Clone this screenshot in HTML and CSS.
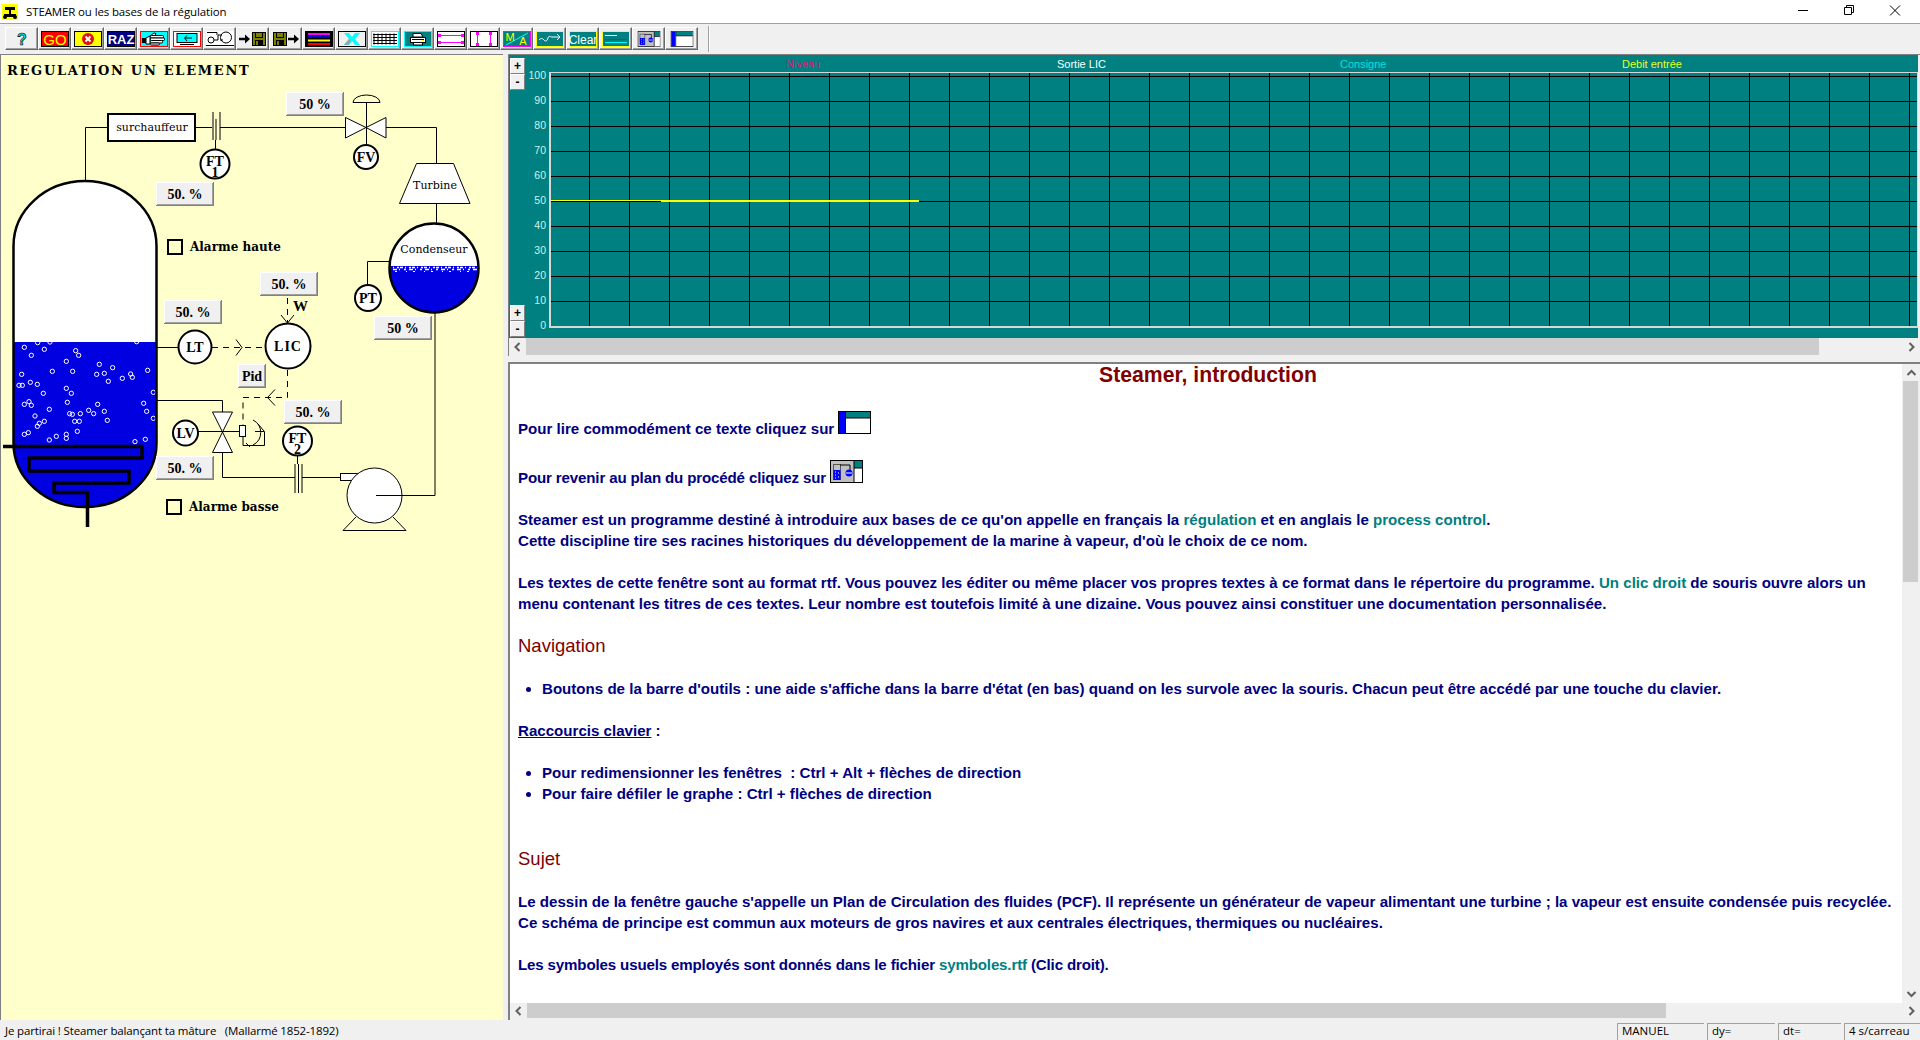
FILE: index.html
```html
<!DOCTYPE html>
<html lang="fr">
<head>
    <meta charset="UTF-8">
    <title>STEAMER ou les bases de la régulation</title>
    <link rel="stylesheet" href="styles.css">
</head>
<body>
    <!-- shared icons and readout box -->
    <svg class="defs" width="0" height="0">
        <symbol id="ico-panes" viewBox="0 0 33 23">
            <rect x="0.5" y="0.5" width="32" height="22" fill="#c0c0c0" stroke="#000"/>
            <rect x="24" y="1" width="8" height="7" fill="#008080"/>
            <rect x="24" y="8" width="8" height="14" fill="#fff"/>
            <path d="M24 1v21M24 8h8" stroke="#000" fill="none"/>
            <rect x="3.5" y="4.5" width="7" height="15" fill="#c0c0c0" stroke="#555"/>
            <rect x="3.5" y="10" width="7" height="10" fill="#0000ff"/>
            <path d="M5 12h1M8 13h1M5 15h1M8 17h1M5 18h1" stroke="#fff"/>
            <path d="M10 5h10v10" stroke="#000" fill="none"/>
            <circle cx="19" cy="13" r="3.5" fill="#0000ff"/>
            <path d="M16 13h6" stroke="#fff"/>
        </symbol>
        <symbol id="ico-window" viewBox="0 0 33 23">
            <rect x="0.5" y="0.5" width="32" height="22" fill="#fff" stroke="#000"/>
            <rect x="1" y="1" width="6" height="21" fill="#0000ff"/>
            <rect x="7" y="1" width="25" height="6" fill="#008080"/>
            <path d="M7.5 1v21M8 7h24" stroke="#000" fill="none"/>
        </symbol>
        <symbol id="ico-floppy" viewBox="0 0 14 14">
            <rect x="0.5" y="0.5" width="13" height="13" fill="#808000" stroke="#000"/>
            <rect x="3" y="0" width="8" height="6" fill="#000"/>
            <rect x="4" y="1" width="6" height="4" fill="#808000"/>
            <rect x="3" y="8" width="8" height="6" fill="#000"/>
            <rect x="4" y="9" width="2" height="4" fill="#808000"/>
        </symbol>
        <symbol id="readout" viewBox="0 0 58 24">
            <rect width="58" height="24" fill="#808080"/>
            <rect width="57" height="23" fill="#fff"/>
            <rect x="1" y="1" width="56" height="22" fill="#a0a0a0"/>
            <rect x="1" y="1" width="55" height="21" fill="#f0f0f0"/>
        </symbol>
        <symbol id="readout-small" viewBox="0 0 28 24">
            <rect width="28" height="24" fill="#808080"/>
            <rect width="27" height="23" fill="#fff"/>
            <rect x="1" y="1" width="26" height="22" fill="#a0a0a0"/>
            <rect x="1" y="1" width="25" height="21" fill="#f0f0f0"/>
        </symbol>
    </svg>

    <header class="titlebar">
        <svg class="app-icon" width="16" height="16" viewBox="0 0 16 16">
            <rect width="16" height="16" fill="#ffff00"/>
            <path d="M3 3h10v3H9v4h5v3H2v-3h5V6H3z" fill="#000"/>
            <circle cx="3" cy="13" r="2" fill="#000"/>
            <circle cx="13" cy="13" r="2" fill="#000"/>
        </svg>
        <span class="app-title">STEAMER ou les bases de la régulation</span>
        <div class="win-controls">
            <svg width="46" height="23" viewBox="0 0 46 23"><path d="M18 10.5h10" stroke="#000" fill="none"/></svg>
            <svg width="46" height="23" viewBox="0 0 46 23"><path d="M18.5 7.5h7v7h-7zM20.5 7.5v-2h7v7h-2" stroke="#000" fill="none"/></svg>
            <svg width="46" height="23" viewBox="0 0 46 23"><path d="M18 5.5l10 10M28 5.5l-10 10" stroke="#000" fill="none"/></svg>
        </div>
    </header>

    <nav class="toolbar">
        <button class="tool"><svg class="ico" viewBox="0 0 28 16"><text class="ico-help" x="14" y="14">?</text></svg></button>
        <button class="tool"><svg class="ico" viewBox="0 0 28 16"><rect x=".5" y=".5" width="27" height="15" fill="#f00" stroke="#000"/><text class="ico-txt go" x="14" y="13.5">GO</text></svg></button>
        <button class="tool"><svg class="ico" viewBox="0 0 28 16"><rect x=".5" y=".5" width="27" height="15" fill="#ff0" stroke="#000"/><circle cx="14" cy="8" r="6" fill="#e01010"/><path d="M11.5 5.5l5 5M16.5 5.5l-5 5" stroke="#fff" stroke-width="2"/></svg></button>
        <button class="tool"><svg class="ico" viewBox="0 0 28 16"><rect x=".5" y=".5" width="27" height="15" fill="#000080" stroke="#000"/><text class="ico-txt raz" x="14" y="13">RAZ</text></svg></button>
        <button class="tool"><svg class="ico" viewBox="0 0 28 16"><rect x=".5" y=".5" width="27" height="15" fill="#0ff" stroke="#f00"/><rect x="2" y="7" width="4" height="5" fill="#000"/><path d="M6 7l4-2 4-3 2 .5-1.500 2.500H10v8H6z" fill="#fff" stroke="#000"/><g fill="#fff" stroke="#000"><rect x="10.500" y="4.500" width="13" height="2.500" rx="1"/><rect x="10.500" y="7" width="14" height="2.500" rx="1"/><rect x="10.500" y="9.500" width="12" height="2.500" rx="1"/><rect x="10.500" y="12" width="9" height="2" rx="1"/></g></svg></button>
        <button class="tool"><svg class="ico" viewBox="0 0 28 16"><rect x=".5" y=".5" width="27" height="15" fill="#fff" stroke="#f00"/><rect x="4" y="2.500" width="20" height="9" fill="#0ff" stroke="#000"/><path d="M19 7h-7m2-2.500L11.500 7l2.500 3M7 13.500h14" stroke="#000" fill="none"/></svg></button>
        <button class="tool"><svg class="ico" viewBox="0 0 28 16"><rect width="28" height="16" fill="#fff"/><circle cx="5" cy="9" r="3" fill="none" stroke="#000"/><circle cx="20" cy="6.500" r="5.500" fill="none" stroke="#000"/><path d="M8 9h4V4h4M14 9h3M0 14.500h28M1 1.500h10V4" stroke="#000" fill="none"/></svg></button>
        <button class="tool"><svg class="ico" viewBox="0 0 28 16"><path d="M0 8h8" stroke="#000" stroke-width="2.500"/><path d="M6 3.500l5 4.500-5 4.500z" fill="#000"/><use href="#ico-floppy" x="13" y="1" width="14" height="14"/></svg></button>
        <button class="tool"><svg class="ico" viewBox="0 0 28 16"><use href="#ico-floppy" x="1" y="1" width="14" height="14"/><path d="M16 8h8" stroke="#000" stroke-width="2.500"/><path d="M22 3.500l5 4.500-5 4.500z" fill="#000"/></svg></button>
        <button class="tool"><svg class="ico" viewBox="0 0 28 16"><rect width="28" height="16" fill="#000"/><path d="M3 3h22" stroke="#f0f" stroke-width="2"/><path d="M3 6h22" stroke="#0000c0" stroke-width="2"/><path d="M3 9.500h22" stroke="#ff0" stroke-width="2"/><path d="M3 13h22" stroke="#f00" stroke-width="2"/></svg></button>
        <button class="tool"><svg class="ico" viewBox="0 0 28 16"><rect x=".5" y=".5" width="27" height="15" fill="#f0f0f0" stroke="#000"/><path d="M6 2h5l3 4 3-4h5l-5 6 5 6h-5l-3-4-3 4H6l5-6z" fill="#0ff"/><path d="M6 14l5-6 2 2-3 4z" fill="#a0a0a0"/></svg></button>
        <button class="tool"><svg class="ico" viewBox="0 0 28 16"><rect x=".5" y=".5" width="27" height="15" fill="#fff" stroke="#0ff"/><path d="M3 2.500v11M7 2.500v11M11 2.500v11M15 2.500v11M19 2.500v11M23 2.500v11M2 3.500h24M2 6.500h24M2 9.500h24M2 12.500h24" stroke="#000" fill="none"/></svg></button>
        <button class="tool"><svg class="ico" viewBox="0 0 28 16"><rect x=".5" y=".5" width="27" height="15" fill="#008080" stroke="#0ff"/><path d="M9 6V2.500h8L19 6z" fill="#fff" stroke="#000"/><rect x="6.500" y="6.500" width="15" height="5" fill="#fff" stroke="#000"/><rect x="9.500" y="11.500" width="9" height="2.500" fill="#fff" stroke="#000"/><path d="M8 8.500h12" stroke="#000"/><rect x="18" y="9" width="2" height="1" fill="#ff0"/></svg></button>
        <button class="tool"><svg class="ico" viewBox="0 0 28 16"><rect x=".5" y=".5" width="27" height="15" fill="#fff" stroke="#000"/><path d="M2 4.500h24M2 11.500h24" stroke="#f0f"/><path d="M1 3h3v3H1zM24 3h3v3h-3zM1 10h3v3H1zM24 10h3v3h-3z" fill="#f0f"/></svg></button>
        <button class="tool"><svg class="ico" viewBox="0 0 28 16"><rect x=".5" y=".5" width="27" height="15" fill="#fff" stroke="#000"/><path d="M7.500 2v12M20.500 2v12" stroke="#f0f"/><path d="M6 1h3v3H6zM19 1h3v3h-3zM6 12h3v3H6zM19 12h3v3h-3z" fill="#f0f"/></svg></button>
        <button class="tool"><svg class="ico" viewBox="0 0 28 16"><rect x=".5" y=".5" width="27" height="15" fill="#008080" stroke="#f0f"/><path d="M3 14L25 2" stroke="#0ff"/><text class="ico-txt ma" x="7" y="10">M</text><text class="ico-txt ma" x="20" y="14">A</text></svg></button>
        <button class="tool"><svg class="ico" viewBox="0 0 28 16"><rect x=".5" y=".5" width="27" height="15" fill="#008080" stroke="#ff0"/><path d="M3 9c2-2 3-2 5 0s3 1 4-2 2-1 4-1h8m-3-3l3 3-3 3" stroke="#fff" fill="none"/></svg></button>
        <button class="tool"><svg class="ico" viewBox="0 0 28 16"><rect x=".5" y=".5" width="27" height="15" fill="#008080" stroke="#ff0"/><text class="ico-txt clear" x="14" y="12.500">Clear</text></svg></button>
        <button class="tool"><svg class="ico" viewBox="0 0 28 16"><rect x=".5" y=".5" width="27" height="15" fill="#008080" stroke="#ff0"/><path d="M3 4.500h12" stroke="#fff"/><path d="M3 8.500h22" stroke="#f00"/><path d="M3 11.500h22" stroke="#0ff"/></svg></button>
        <button class="tool"><svg class="ico" viewBox="0 0 33 23"><use href="#ico-panes" width="33" height="23"/></svg></button>
        <button class="tool"><svg class="ico" viewBox="0 0 33 23"><use href="#ico-window" width="33" height="23"/></svg></button>
        <span class="tool-sep"></span>
    </nav>

    <main class="workspace">
        <!-- process diagram: viewBox uses page coordinates -->
        <section class="pcf">
            <svg class="pcf-svg" width="503" height="966" viewBox="0 54 503 966">
                <defs>
                    <clipPath id="boiler-clip">
                        <path d="M13.500 246A71.500 65 0 0 1 156.500 246V443A71.500 64 0 0 1 13.500 443Z"/>
                    </clipPath>
                    <clipPath id="cond-clip"><circle cx="434" cy="268" r="44"/></clipPath>
                </defs>
                <text class="pcf-head" x="7" y="75">REGULATION UN ELEMENT</text>

                <!-- pipes -->
                <g class="pipe">
                    <path d="M85.500 181V127.500H107M195 127.500H212M220 127.500H345M386 127.500H436.500V163"/>
                    <path d="M213 112V140M216 119V140M220 112V140M215.500 140V149"/>
                    <path d="M366.500 102V145"/>
                    <path d="M353 102.500A13.500 7.500 0 0 1 380 102.500Z" fill="none"/>
                    <path d="M436.500 203V224M389 261.500H367.500V285M435 313V495.500H376"/>
                    <path d="M157 347.500H178M157 400.500H222.500V412M198 431.500H240M222.500 453V477.500H295M302 477.500H340"/>
                    <path d="M295 464V493M298.500 464V493M302 464V493M297.500 455V464"/>
                </g>
                <path class="shape" d="M345.500 117.500V138L366 127.500ZM386 117.500V138L366 127.500Z"/>
                <path class="shape" d="M416.500 163.500H453.500L470 203.500H399.500Z"/>
                <path class="shape" d="M212.500 412H232.500L222.500 432ZM212.500 452.500H232.500L222.500 432Z"/>
                <rect class="box" x="108" y="114" width="87" height="27"/>
                <text class="lbl" x="152" y="131">surchauffeur</text>
                <text class="lbl" x="435" y="189">Turbine</text>

                <!-- boiler -->
                <path d="M13.500 246A71.500 65 0 0 1 156.500 246V443A71.500 64 0 0 1 13.500 443Z" fill="#fff"/>
                <g clip-path="url(#boiler-clip)">
                    <rect x="10" y="342" width="150" height="170" fill="#0000e0"/>
                    <g class="bubbles" transform="translate(0 320) scale(.3333)">
                        <circle cx="73" cy="82" r="6.500"/><circle cx="133" cy="88" r="6.500"/><circle cx="94" cy="106" r="6.500"/><circle cx="113" cy="68" r="6.500"/><circle cx="150" cy="66" r="6.500"/><circle cx="227" cy="92" r="6.500"/><circle cx="236" cy="106" r="6.500"/><circle cx="199" cy="124" r="6.500"/><circle cx="298" cy="133" r="6.500"/><circle cx="338" cy="143" r="6.500"/><circle cx="157" cy="154" r="6.500"/><circle cx="218" cy="154" r="6.500"/><circle cx="65" cy="163" r="6.500"/><circle cx="290" cy="163" r="6.500"/><circle cx="313" cy="160" r="6.500"/><circle cx="392" cy="162" r="6.500"/><circle cx="397" cy="172" r="6.500"/><circle cx="443" cy="151" r="6.500"/><circle cx="367" cy="175" r="6.500"/><circle cx="325" cy="184" r="6.500"/><circle cx="57" cy="196" r="6.500"/><circle cx="67" cy="196" r="6.500"/><circle cx="91" cy="187" r="6.500"/><circle cx="112" cy="193" r="6.500"/><circle cx="199" cy="205" r="6.500"/><circle cx="214" cy="220" r="6.500"/><circle cx="130" cy="220" r="6.500"/><circle cx="460" cy="217" r="6.500"/><circle cx="202" cy="247" r="6.500"/><circle cx="87" cy="245" r="6.500"/><circle cx="73" cy="253" r="6.500"/><circle cx="94" cy="256" r="6.500"/><circle cx="293" cy="253" r="6.500"/><circle cx="431" cy="250" r="6.500"/><circle cx="148" cy="268" r="6.500"/><circle cx="266" cy="271" r="6.500"/><circle cx="281" cy="281" r="6.500"/><circle cx="209" cy="281" r="6.500"/><circle cx="217" cy="283" r="6.500"/><circle cx="241" cy="281" r="6.500"/><circle cx="313" cy="274" r="6.500"/><circle cx="440" cy="274" r="6.500"/><circle cx="105" cy="288" r="6.500"/><circle cx="460" cy="295" r="6.500"/><circle cx="133" cy="304" r="6.500"/><circle cx="118" cy="310" r="6.500"/><circle cx="112" cy="319" r="6.500"/><circle cx="224" cy="304" r="6.500"/><circle cx="238" cy="304" r="6.500"/><circle cx="322" cy="301" r="6.500"/><circle cx="232" cy="334" r="6.500"/><circle cx="73" cy="343" r="6.500"/><circle cx="85" cy="338" r="6.500"/><circle cx="199" cy="343" r="6.500"/><circle cx="199" cy="355" r="6.500"/><circle cx="169" cy="349" r="6.500"/><circle cx="148" cy="360" r="6.500"/><circle cx="405" cy="365" r="6.500"/><circle cx="436" cy="358" r="6.500"/><circle cx="410" cy="65" r="6.500"/>
                    </g>
                </g>
                <path class="vessel" d="M13.500 246A71.500 65 0 0 1 156.500 246V443A71.500 64 0 0 1 13.500 443Z"/>
                <path class="coil" d="M3 446.500H142V458H29V471H129V483H54V492.500H87.500V527"/>

                <!-- condenser -->
                <circle cx="434" cy="268" r="44" fill="#fff"/>
                <g clip-path="url(#cond-clip)">
                    <rect x="388" y="266" width="92" height="48" fill="#0000e0"/>
                    <path class="foam" d="M388 267.500H480"/>
                    <path class="foam foam-b" d="M388 269.500H480"/>
                    <path class="foam foam-c" d="M388 271.500H480"/>
                </g>
                <circle class="vessel" cx="434" cy="268" r="44.500"/>
                <text class="lbl" x="434" y="253">Condenseur</text>

                <!-- pump -->
                <rect class="shape" x="340.500" y="473.500" width="18" height="7"/>
                <circle class="shape" cx="374.500" cy="495.500" r="27.500"/>
                <path class="pipe" d="M376 495.500H402M356 517L343 530.500H406L393 517"/>

                <!-- signals -->
                <g class="signal">
                    <path d="M212 347.500H265M287.500 298V323M287.500 370V397.500H243V425"/>
                </g>
                <g class="pipe">
                    <path d="M236 339.500L242 347.500L236 355.500M281 315L287.500 323L294 315M275 389.500L267.500 397.500L275 405.500"/>
                </g>
                <text class="ltr" x="293" y="311">W</text>

                <!-- actuator on the feed valve -->
                <rect class="shape" x="239.500" y="425.500" width="6" height="11"/>
                <g class="pipe">
                    <path d="M253 420A14 14 0 0 1 253 445M243 437V445.500H264.500V431.500H255M258 424L264 431M246 443L250 447"/>
                </g>

                <!-- instruments -->
                <circle class="inst" cx="215" cy="164" r="14.500"/>
                <text class="tag" x="215" y="166">FT</text>
                <text class="tag tag-sub" x="215" y="177">1</text>
                <circle class="inst" cx="366" cy="157" r="12"/>
                <text class="tag" x="366" y="162">FV</text>
                <circle class="inst" cx="368" cy="298" r="13"/>
                <text class="tag" x="368" y="303">PT</text>
                <circle class="inst" cx="195" cy="347" r="16.500"/>
                <text class="tag" x="195" y="352">LT</text>
                <circle class="inst" cx="288" cy="346" r="22.500"/>
                <text class="tag tag-wide" x="288" y="351">LIC</text>
                <circle class="inst" cx="185.500" cy="433" r="12.500"/>
                <text class="tag" x="185.500" y="438">LV</text>
                <circle class="inst" cx="297.500" cy="441" r="14.500"/>
                <text class="tag" x="297.500" y="443">FT</text>
                <text class="tag tag-sub" x="297.500" y="454">2</text>

                <!-- readouts -->
                <use href="#readout" x="286" y="92" width="58" height="24"/>
                <text class="val" x="315" y="109">50 %</text>
                <use href="#readout" x="156" y="182" width="58" height="24"/>
                <text class="val" x="185" y="199">50. %</text>
                <use href="#readout" x="260" y="272" width="58" height="24"/>
                <text class="val" x="289" y="289">50. %</text>
                <use href="#readout" x="164" y="300" width="58" height="24"/>
                <text class="val" x="193" y="317">50. %</text>
                <use href="#readout" x="374" y="316" width="58" height="24"/>
                <text class="val" x="403" y="333">50 %</text>
                <use href="#readout" x="284" y="400" width="58" height="24"/>
                <text class="val" x="313" y="417">50. %</text>
                <use href="#readout" x="156" y="456" width="58" height="24"/>
                <text class="val" x="185" y="473">50. %</text>
                <use href="#readout-small" x="238" y="364" width="28" height="24"/>
                <text class="val" x="252" y="381">Pid</text>

                <!-- alarms -->
                <rect class="box box-empty" x="168" y="240" width="14" height="14"/>
                <text class="alarm" x="190" y="251">Alarme haute</text>
                <rect class="box box-empty" x="167" y="500" width="14" height="14"/>
                <text class="alarm" x="189" y="511">Alarme basse</text>
            </svg>
        </section>

        <div class="right-col">
            <section class="chart">
                <div class="chart-body">
                    <div class="zoom-btns">
                        <div class="zoom-pair">
                            <button class="zoom-btn">+</button>
                            <button class="zoom-btn">-</button>
                        </div>
                        <div class="zoom-pair">
                            <button class="zoom-btn">+</button>
                            <button class="zoom-btn">-</button>
                        </div>
                    </div>
                    <div class="scale">
                        <span>100</span><span>90</span><span>80</span><span>70</span><span>60</span><span>50</span><span>40</span><span>30</span><span>20</span><span>10</span><span>0</span>
                    </div>
                    <div class="plot-col">
                        <div class="legend">
                            <span class="c-niveau">Niveau</span>
                            <span class="c-sortie">Sortie LIC</span>
                            <span class="c-consigne">Consigne</span>
                            <span class="c-debit">Debit entrée</span>
                        </div>
                        <div class="plot">
                            <div class="trace trace-old"></div>
                            <div class="trace trace-new"></div>
                        </div>
                    </div>
                </div>
                <div class="hscroll">
                    <svg class="chev" viewBox="0 0 10 10"><path d="M7 1L3 5l4 4"/></svg>
                    <div class="hscroll-track"><div class="thumb thumb-chart"></div></div>
                    <svg class="chev" viewBox="0 0 10 10"><path d="M3 1l4 4-4 4"/></svg>
                </div>
            </section>

            <section class="doc">
                <div class="doc-row">
                    <article class="doc-text">
                        <h1>Steamer, introduction</h1>
                        <p>Pour lire commodément ce texte cliquez sur <svg class="inline-ico" viewBox="0 0 33 23"><use href="#ico-window" width="33" height="23"/></svg></p>
                        <p class="tight">Pour revenir au plan du procédé cliquez sur <svg class="inline-ico" viewBox="0 0 33 23"><use href="#ico-panes" width="33" height="23"/></svg></p>
                        <p>Steamer est un programme destiné à introduire aux bases de ce qu'on appelle en français la <a>régulation</a> et en anglais le <a>process control</a>.<br>Cette discipline tire ses racines historiques du développement de la marine à vapeur, d'où le choix de ce nom.</p>
                        <p>Les textes de cette fenêtre sont au format rtf. Vous pouvez les éditer ou même placer vos propres textes à ce format dans le répertoire du programme. <a>Un clic droit</a> de souris ouvre alors un<br>menu contenant les titres de ces textes. Leur nombre est toutefois limité à une dizaine. Vous pouvez ainsi constituer une documentation personnalisée.</p>
                        <h2>Navigation</h2>
                        <ul>
                            <li>Boutons de la barre d'outils : une aide s'affiche dans la barre d'état (en bas) quand on les survole avec la souris. Chacun peut être accédé par une touche du clavier.</li>
                        </ul>
                        <p><u>Raccourcis clavier</u> :</p>
                        <ul>
                            <li>Pour redimensionner les fenêtres &nbsp;: Ctrl + Alt + flèches de direction</li>
                            <li>Pour faire défiler le graphe : Ctrl + flèches de direction</li>
                        </ul>
                        <h2 class="h2-far">Sujet</h2>
                        <p>Le dessin de la fenêtre gauche s'appelle un Plan de Circulation des fluides (PCF). Il représente un générateur de vapeur alimentant une turbine ; la vapeur est ensuite condensée puis recyclée.<br>Ce schéma de principe est commun aux moteurs de gros navires et aux centrales électriques, thermiques ou nucléaires.</p>
                        <p class="tight">Les symboles usuels employés sont donnés dans le fichier <a>symboles.rtf</a> (Clic droit).</p>
                    </article>
                    <div class="vscroll">
                        <svg class="chev" viewBox="0 0 10 10"><path d="M1 7l4-4 4 4"/></svg>
                        <div class="vscroll-track"><div class="thumb thumb-doc"></div></div>
                        <svg class="chev" viewBox="0 0 10 10"><path d="M1 3l4 4 4-4"/></svg>
                    </div>
                </div>
                <div class="hscroll hscroll-doc">
                    <svg class="chev" viewBox="0 0 10 10"><path d="M7 1L3 5l4 4"/></svg>
                    <div class="hscroll-track"><div class="thumb thumb-dochz"></div></div>
                    <svg class="chev" viewBox="0 0 10 10"><path d="M3 1l4 4-4 4"/></svg>
                </div>
            </section>
        </div>
    </main>

    <footer class="statusbar">
        <span class="status-msg">Je partirai ! Steamer balançant ta mâture &nbsp; (Mallarmé 1852-1892)</span>
        <span class="panel panel-mode">MANUEL</span>
        <span class="panel panel-dy">dy=</span>
        <span class="panel panel-dt">dt=</span>
        <span class="panel panel-step">4 s/carreau</span>
    </footer>
</body>
</html>
```

FILE: styles.css
```css
html, body {
    margin: 0;
    padding: 0;
    height: 100%;
}

body {
    display: flex;
    flex-direction: column;
    width: 1920px;
    height: 1040px;
    overflow: hidden;
    background-color: #f0f0f0;
    font-family: "Liberation Sans", Arial, sans-serif;
}

.defs {
    position: absolute;
}

/* title bar */
.titlebar {
    display: flex;
    align-items: center;
    flex: none;
    height: 23px;
    background-color: #fff;
    border-bottom: 1px solid #a0a0a0;
}

.app-icon {
    margin-left: 2px;
    margin-right: 8px;
}

.app-title {
    font-family: "Open Sans", sans-serif;
    font-size: 11.500px;
    letter-spacing: -0.130px;
    color: #000;
}

.win-controls {
    display: flex;
    margin-left: auto;
    margin-right: 2px;
}

/* toolbar */
.toolbar {
    display: flex;
    align-items: flex-start;
    flex: none;
    height: 30px;
    padding-left: 5px;
    padding-top: 3px;
    box-sizing: border-box;
}

.tool {
    display: flex;
    align-items: center;
    justify-content: center;
    width: 33px;
    height: 23px;
    padding: 0;
    background-color: #f0f0f0;
    border: 1px solid;
    border-color: #fff #696969 #696969 #fff;
    box-shadow: inset -1px -1px #a0a0a0;
}

.ico {
    display: block;
    width: 28px;
    height: 16px;
}

.ico-help {
    font: bold 16px "Liberation Sans", sans-serif;
    text-anchor: middle;
    fill: #00e8e8;
    stroke: #000;
    stroke-width: 0.600px;
}

.ico-txt {
    text-anchor: middle;
    font-family: "Liberation Sans", sans-serif;
}

.go {
    font-size: 15px;
    fill: #ff0;
}

.raz {
    font-size: 13px;
    font-weight: bold;
    fill: #fff;
}

.ma {
    font-size: 11px;
    fill: #ff0;
}

.clear {
    font-size: 12px;
    fill: #fff;
}

.tool-sep {
    width: 0;
    height: 26px;
    margin-left: 10px;
    margin-top: -1px;
    border-left: 1px solid #a0a0a0;
    border-right: 1px solid #fff;
}

/* main split */
.workspace {
    display: flex;
    flex: none;
    height: 966px;
}

.pcf {
    flex: none;
    width: 503px;
    height: 966px;
    background-color: #ffffcc;
    position: relative;
}

.pcf::after {
    content: "";
    position: absolute;
    inset: 0;
    box-shadow: inset 1px 1px #808080;
    pointer-events: none;
}

.pcf-svg {
    display: block;
}

.pipe {
    fill: none;
    stroke: #000;
    stroke-width: 1;
}

.signal {
    fill: none;
    stroke: #000;
    stroke-width: 1;
    stroke-dasharray: 6 5;
}

.shape {
    fill: #fff;
    stroke: #000;
    stroke-width: 1;
}

.box {
    fill: #fff;
    stroke: #000;
    stroke-width: 2;
}

.box-empty {
    fill: none;
}

.vessel {
    fill: none;
    stroke: #000;
    stroke-width: 2.500;
}

.coil {
    fill: none;
    stroke: #000;
    stroke-width: 3.500;
}

.bubbles circle {
    fill: none;
    stroke: #fff;
    stroke-width: 3;
}

.foam {
    stroke: #fff;
    stroke-width: 1.500;
    stroke-dasharray: 3 2 1 3 2 1;
}

.foam-b {
    stroke-dasharray: 2 3 4 2 1 4;
}

.foam-c {
    stroke-width: 1;
    stroke-dasharray: 1 6 2 9;
}

.inst {
    fill: #fff;
    stroke: #000;
    stroke-width: 2;
}

.pcf-head,
.lbl,
.alarm {
    font-family: "DejaVu Serif", "Liberation Serif", serif;
    fill: #000;
}

.tag,
.val,
.ltr {
    font-family: "Liberation Serif", serif;
    font-weight: bold;
    fill: #000;
}

.pcf-head {
    font-size: 13px;
    font-weight: bold;
    letter-spacing: 1.700px;
}

.lbl {
    font-size: 11px;
    text-anchor: middle;
}

.tag {
    font-size: 14px;
    text-anchor: middle;
}

.tag-sub {
    font-size: 14px;
}

.tag-wide {
    letter-spacing: 1px;
}

.val {
    font-size: 14px;
    text-anchor: middle;
}

.alarm {
    font-size: 12px;
    font-weight: bold;
}

.ltr {
    font-size: 15px;
}

.right-col {
    display: flex;
    flex-direction: column;
    flex: none;
    width: 1412px;
    margin-left: 5px;
}

/* chart */
.chart {
    flex: none;
    height: 302px;
    box-sizing: border-box;
    border-left: 1px solid #808080;
    border-top: 1px solid #808080;
}

.chart-body {
    display: flex;
    height: 283px;
    background-color: #008080;
    margin-right: 2px;
}

.zoom-btns {
    display: flex;
    flex-direction: column;
    justify-content: space-between;
    flex: none;
    width: 15px;
    margin-left: 1px;
    padding-top: 3px;
    padding-bottom: 1px;
}

.zoom-pair {
    display: flex;
    flex-direction: column;
}

.zoom-btn {
    width: 15px;
    height: 16px;
    padding: 0;
    font: bold 12px/12px "Liberation Sans", sans-serif;
    color: #000;
    background-color: #f0f0f0;
    border: 1px solid;
    border-color: #fff #808080 #808080 #fff;
}

.scale {
    display: flex;
    flex-direction: column;
    flex: none;
    width: 21px;
    padding-top: 8px;
    margin-right: 3px;
    color: #d0f0e8;
    font-size: 10.500px;
    text-align: right;
}

.scale span {
    height: 25px;
    line-height: 25px;
}

.plot-col {
    flex: none;
    width: 1369px;
}

.legend {
    display: grid;
    grid-template-columns: 271px 283px 282px auto;
    align-items: center;
    height: 17px;
    padding-left: 237px;
    font-size: 11px;
}

.c-niveau {
    color: #d81e78;
}

.c-sortie {
    color: #fff;
}

.c-consigne {
    color: #00e0e0;
}

.c-debit {
    color: #e8ff20;
}

.plot {
    position: relative;
    height: 253px;
    border: 1px solid #d8d8d8;
    border-width: 1px 1px 2px 2px;
    background-color: #008080;
    background-image:
        linear-gradient(#000 1px, transparent 1px),
        linear-gradient(90deg, #000 1px, transparent 1px);
    background-size: 40px 25px;
    background-position: 38px 3px;
}

.trace {
    position: absolute;
    background-color: #ffff00;
}

.trace-old {
    left: 0;
    top: 127px;
    width: 110px;
    height: 1px;
}

.trace-new {
    left: 110px;
    top: 127px;
    width: 258px;
    height: 2px;
}

/* scrollbars */
.hscroll {
    display: flex;
    align-items: center;
    height: 17px;
    background-color: #f0f0f0;
}

.hscroll-track {
    flex: 1;
    align-self: stretch;
}

.chev {
    flex: none;
    width: 17px;
    height: 10px;
}

.chev path {
    fill: none;
    stroke: #606060;
    stroke-width: 2;
}

.thumb {
    background-color: #cdcdcd;
}

.thumb-chart {
    width: 1293px;
    height: 100%;
}

.thumb-dochz {
    width: 1139px;
    height: 100%;
}

.hscroll-doc {
    height: 15px;
}

.vscroll {
    display: flex;
    flex-direction: column;
    align-items: center;
    flex: none;
    width: 18px;
    padding-top: 4px;
    padding-bottom: 4px;
    box-sizing: border-box;
}

.vscroll-track {
    flex: 1;
    width: 100%;
    margin-top: 3px;
}

.thumb-doc {
    width: 15px;
    height: 201px;
    margin-left: 1px;
}

/* text window */
.doc {
    flex: none;
    height: 658px;
    margin-top: 6px;
    box-sizing: border-box;
    border-left: 2px solid #808080;
    border-top: 2px solid #808080;
}

.doc-row {
    display: flex;
    height: 639px;
}

.doc-text {
    flex: 1;
    overflow: hidden;
    padding-left: 8px;
    background-color: #fff;
    color: #000080;
    font-size: 15.100px;
    font-weight: bold;
    line-height: 21px;
    white-space: nowrap;
}

.doc-text h1 {
    margin: 0 0 30px;
    height: 24px;
    padding-right: 4px;
    color: #800000;
    font-size: 21.200px;
    line-height: 22px;
    text-align: center;
}

.doc-text h2 {
    margin: 21px 0 22px;
    color: #800000;
    font-size: 18.500px;
    font-weight: normal;
    line-height: 21px;
}

.doc-text h2.h2-far {
    margin-top: 44px;
}

.doc-text p {
    margin: 0 0 21px;
}

.doc-text p:first-of-type {
    margin-bottom: 28px;
}

.doc-text p.tight {
    letter-spacing: -0.150px;
}

.doc-text a {
    color: #008080;
}

.doc-text ul {
    margin: 0 0 21px;
    padding-left: 24px;
}

.inline-ico {
    width: 33px;
    height: 23px;
    margin-top: -8px;
    vertical-align: 0;
}

/* status bar */
.statusbar {
    display: flex;
    align-items: flex-end;
    flex: none;
    height: 20px;
    font-family: "Open Sans", sans-serif;
    font-size: 11.500px;
    color: #000;
}

.status-msg {
    margin-right: auto;
    padding-left: 5px;
    height: 17px;
    line-height: 15px;
    letter-spacing: -0.150px;
}

.panel {
    flex: none;
    height: 17px;
    line-height: 14px;
    padding-left: 4px;
    margin-left: 3px;
    box-sizing: border-box;
    border-left: 1px solid #a0a0a0;
    border-top: 1px solid #a0a0a0;
}

.panel-mode {
    width: 87px;
}

.panel-dy {
    width: 68px;
}

.panel-dt {
    width: 63px;
}

.panel-step {
    width: 76px;
}
```
